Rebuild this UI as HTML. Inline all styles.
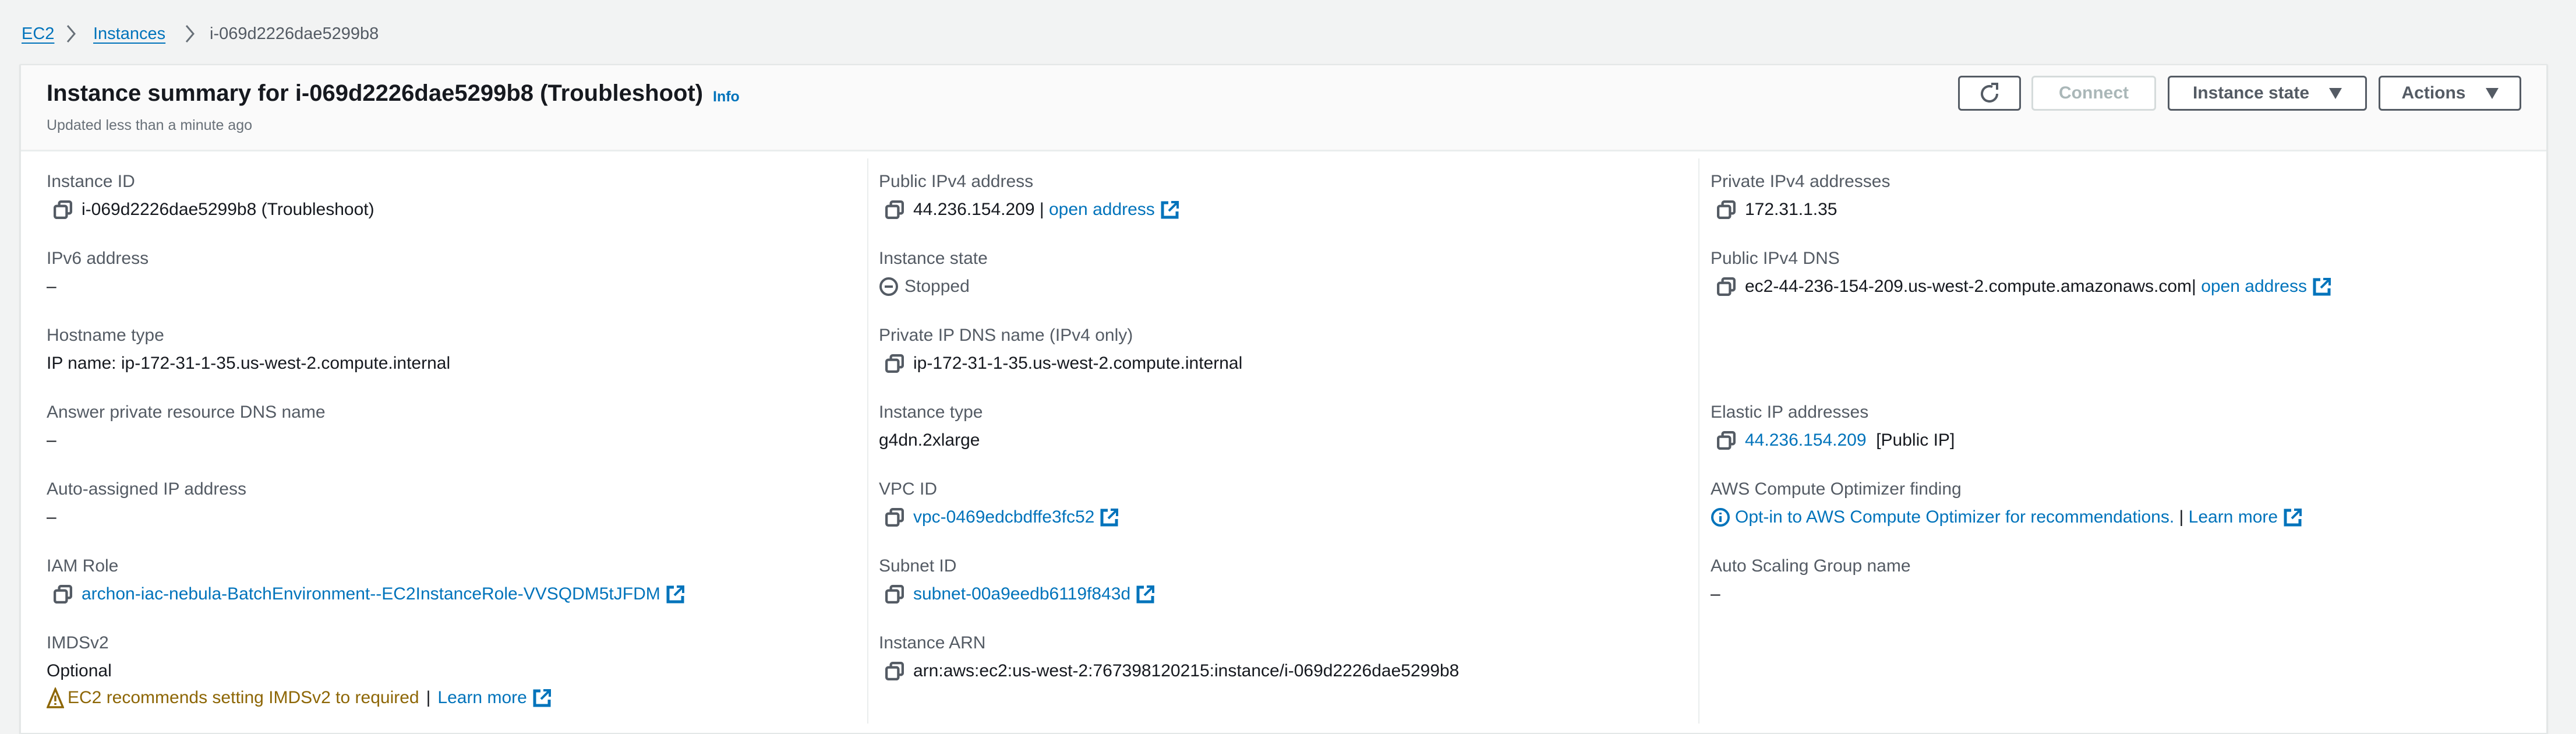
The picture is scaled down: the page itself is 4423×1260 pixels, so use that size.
<!DOCTYPE html>
<html><head><meta charset="utf-8"><style>
*{margin:0;padding:0;box-sizing:border-box}
body{width:4423px;height:1259px;background:#f2f3f3;font-family:"Liberation Sans",sans-serif;position:relative;overflow:hidden;color:#16191f}
.a{position:absolute;white-space:nowrap}
.bc{top:38px;font-size:29px;line-height:40px}
.bc a{color:#0073bb;text-decoration:underline;text-underline-offset:6px}
.card{position:absolute;left:34px;top:110px;width:4340px;height:1150px;background:#fff;border:2px solid #e4e7e7;box-shadow:0 1px 2px rgba(0,28,36,.2)}
.hdr{position:absolute;left:0;top:0;width:100%;height:148px;background:#fafafa;border-bottom:3px solid #eaeded}
.lab{font-size:30px;line-height:40px;color:#545b64}
.val{font-size:30px;line-height:40px;color:#16191f;display:flex;align-items:center}
.lnk{color:#0073bb}
.cp{width:32px;height:32px;margin-right:16px;flex:none}
.ex{width:32px;height:32px;margin-left:10px;flex:none}
.div{position:absolute;top:270px;width:2px;height:970px;background:#eaeded}
.btn{position:absolute;top:130px;height:60px;border:3px solid #545b64;border-radius:6px;background:#fff;font-size:30px;font-weight:bold;color:#545b64;display:flex;align-items:center;justify-content:center}
.tri{display:inline-block;width:0;height:0;border-left:11px solid transparent;border-right:11px solid transparent;border-top:19px solid #545b64;margin-left:34px}
</style></head><body>
<svg width="0" height="0" style="position:absolute"><defs>
<symbol id="cp" viewBox="0 0 30 30"><rect x="9" y="2" width="19" height="19" rx="3" fill="none" stroke="#545b64" stroke-width="4"/><rect x="2" y="9" width="19" height="19" rx="3" fill="#fff" stroke="#545b64" stroke-width="4"/></symbol>
<symbol id="ex" viewBox="0 0 32 32"><path d="M13 4H3v25h25V19" fill="none" stroke="#0073bb" stroke-width="5"/><path d="M18 3h11v11M28 4L14 18" fill="none" stroke="#0073bb" stroke-width="4"/></symbol>
</defs></svg>

<div class="a bc" style="left:37px"><a>EC2</a></div>
<svg class="a" style="left:112px;top:38px" width="20" height="40" viewBox="0 0 20 40"><path d="M4 6l12 14-12 14" fill="none" stroke="#687078" stroke-width="3"/></svg>
<div class="a bc" style="left:160px"><a>Instances</a></div>
<svg class="a" style="left:316px;top:38px" width="20" height="40" viewBox="0 0 20 40"><path d="M4 6l12 14-12 14" fill="none" stroke="#687078" stroke-width="3"/></svg>
<div class="a bc" style="left:360px;color:#545b64">i-069d2226dae5299b8</div>

<div class="card"><div class="hdr"></div>
<div class="div" style="left:1453px;top:160px"></div>
<div class="div" style="left:2880px;top:160px"></div>
</div>

<div class="a" style="left:80px;top:136px;font-size:40px;font-weight:bold;line-height:48px">Instance summary for i-069d2226dae5299b8 (Troubleshoot)</div>
<div class="a" style="left:1224px;top:150px;font-size:25px;font-weight:bold;color:#0073bb;line-height:32px">Info</div>
<div class="a" style="left:80px;top:198px;font-size:25px;color:#687078;line-height:34px">Updated less than a minute ago</div>

<div class="btn" style="left:3362px;width:108px"><svg width="34" height="38" viewBox="0 0 34 38"><path d="M22 8A13 13 0 1 0 30 20" fill="none" stroke="#545b64" stroke-width="4"/><path d="M20 3h10v10" fill="none" stroke="#545b64" stroke-width="4"/></svg></div>
<div class="btn" style="left:3488px;width:214px;border-color:#d5dbdb;color:#aab7b8">Connect</div>
<div class="btn" style="left:3722px;width:342px">Instance state<span class="tri"></span></div>
<div class="btn" style="left:4084px;width:245px">Actions<span class="tri"></span></div>

<!-- column 1 -->
<div class="a lab" style="left:80px;top:292px">Instance ID</div>
<div class="a val" style="left:92px;top:340px"><svg class="cp"><use href="#cp"/></svg>i-069d2226dae5299b8 (Troubleshoot)</div>
<div class="a lab" style="left:80px;top:424px">IPv6 address</div>
<div class="a val" style="left:80px;top:472px">–</div>
<div class="a lab" style="left:80px;top:556px">Hostname type</div>
<div class="a val" style="left:80px;top:604px">IP name: ip-172-31-1-35.us-west-2.compute.internal</div>
<div class="a lab" style="left:80px;top:688px">Answer private resource DNS name</div>
<div class="a val" style="left:80px;top:736px">–</div>
<div class="a lab" style="left:80px;top:820px">Auto-assigned IP address</div>
<div class="a val" style="left:80px;top:868px">–</div>
<div class="a lab" style="left:80px;top:952px">IAM Role</div>
<div class="a val" style="left:92px;top:1000px"><svg class="cp"><use href="#cp"/></svg><span class="lnk">archon-iac-nebula-BatchEnvironment--EC2InstanceRole-VVSQDM5tJFDM</span><svg class="ex"><use href="#ex"/></svg></div>
<div class="a lab" style="left:80px;top:1084px">IMDSv2</div>
<div class="a val" style="left:80px;top:1132px">Optional</div>
<div class="a val" style="left:80px;top:1178px;color:#8d6605"><svg width="30" height="36" viewBox="0 0 30 36" style="margin-right:6px"><path d="M15 3L2 34h26z" fill="none" stroke="#8d6605" stroke-width="3.5"/><path d="M15 14v10M15 27v3" stroke="#8d6605" stroke-width="3.5"/></svg>EC2 recommends setting IMDSv2 to required <span style="color:#16191f;margin:0 12px">|</span><span class="lnk">Learn more</span><svg class="ex"><use href="#ex"/></svg></div>

<!-- column 2 -->
<div class="a lab" style="left:1509px;top:292px">Public IPv4 address</div>
<div class="a val" style="left:1520px;top:340px"><svg class="cp"><use href="#cp"/></svg>44.236.154.209&nbsp;|&nbsp;<span class="lnk">open address</span><svg class="ex"><use href="#ex"/></svg></div>
<div class="a lab" style="left:1509px;top:424px">Instance state</div>
<div class="a val" style="left:1509px;top:472px;color:#545b64"><svg width="34" height="34" viewBox="0 0 34 34" style="margin-right:10px"><circle cx="17" cy="17" r="14" fill="none" stroke="#545b64" stroke-width="4"/><path d="M10 17h14" stroke="#545b64" stroke-width="4"/></svg>Stopped</div>
<div class="a lab" style="left:1509px;top:556px">Private IP DNS name (IPv4 only)</div>
<div class="a val" style="left:1520px;top:604px"><svg class="cp"><use href="#cp"/></svg>ip-172-31-1-35.us-west-2.compute.internal</div>
<div class="a lab" style="left:1509px;top:688px">Instance type</div>
<div class="a val" style="left:1509px;top:736px">g4dn.2xlarge</div>
<div class="a lab" style="left:1509px;top:820px">VPC ID</div>
<div class="a val" style="left:1520px;top:868px"><svg class="cp"><use href="#cp"/></svg><span class="lnk">vpc-0469edcbdffe3fc52</span><svg class="ex"><use href="#ex"/></svg></div>
<div class="a lab" style="left:1509px;top:952px">Subnet ID</div>
<div class="a val" style="left:1520px;top:1000px"><svg class="cp"><use href="#cp"/></svg><span class="lnk">subnet-00a9eedb6119f843d</span><svg class="ex"><use href="#ex"/></svg></div>
<div class="a lab" style="left:1509px;top:1084px">Instance ARN</div>
<div class="a val" style="left:1520px;top:1132px"><svg class="cp"><use href="#cp"/></svg>arn:aws:ec2:us-west-2:767398120215:instance/i-069d2226dae5299b8</div>

<!-- column 3 -->
<div class="a lab" style="left:2937px;top:292px">Private IPv4 addresses</div>
<div class="a val" style="left:2948px;top:340px"><svg class="cp"><use href="#cp"/></svg>172.31.1.35</div>
<div class="a lab" style="left:2937px;top:424px">Public IPv4 DNS</div>
<div class="a val" style="left:2948px;top:472px"><svg class="cp"><use href="#cp"/></svg>ec2-44-236-154-209.us-west-2.compute.amazonaws.com|&nbsp;<span class="lnk">open address</span><svg class="ex"><use href="#ex"/></svg></div>
<div class="a lab" style="left:2937px;top:688px">Elastic IP addresses</div>
<div class="a val" style="left:2948px;top:736px"><svg class="cp"><use href="#cp"/></svg><span class="lnk">44.236.154.209</span>&nbsp;&nbsp;[Public IP]</div>
<div class="a lab" style="left:2937px;top:820px">AWS Compute Optimizer finding</div>
<div class="a val" style="left:2937px;top:868px"><svg width="34" height="34" viewBox="0 0 34 34" style="margin-right:8px"><circle cx="17" cy="17" r="14" fill="none" stroke="#0073bb" stroke-width="4"/><path d="M17 15v10M17 9v3" stroke="#0073bb" stroke-width="4"/></svg><span class="lnk">Opt-in to AWS Compute Optimizer for recommendations.</span>&nbsp;|&nbsp;<span class="lnk">Learn more</span><svg class="ex"><use href="#ex"/></svg></div>
<div class="a lab" style="left:2937px;top:952px">Auto Scaling Group name</div>
<div class="a val" style="left:2937px;top:1000px">–</div>
</body></html>
